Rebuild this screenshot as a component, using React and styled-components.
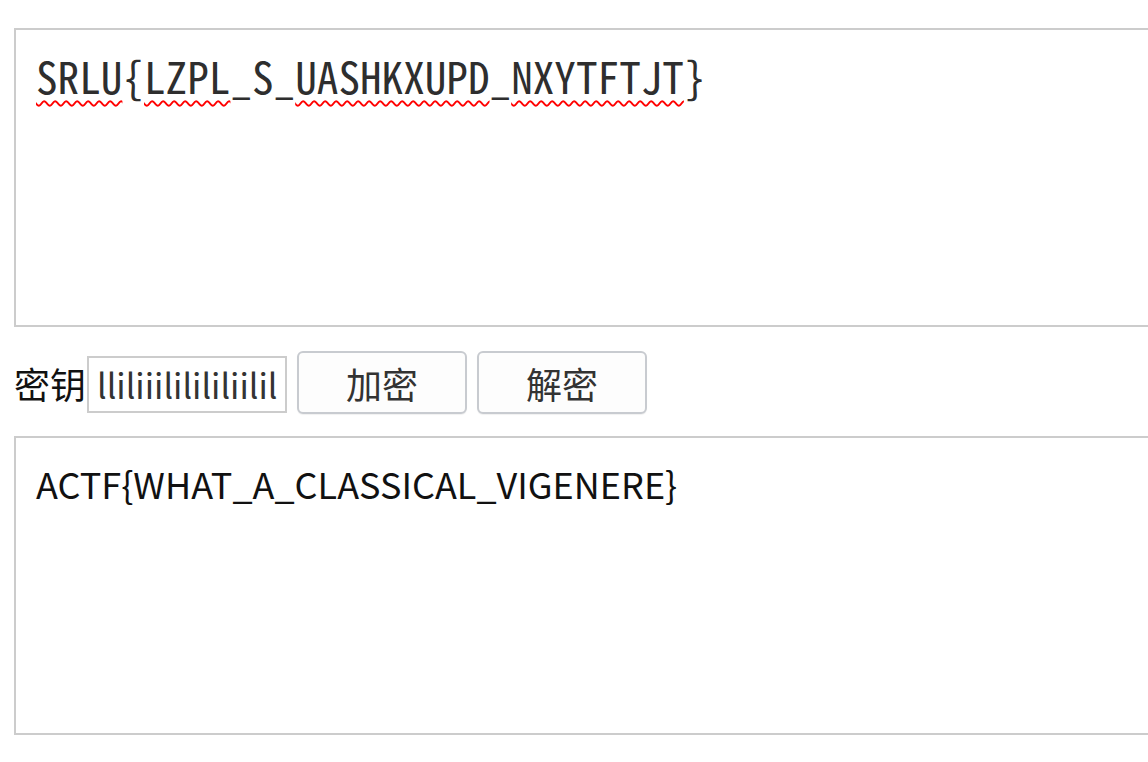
import React from "react";
import styled, { createGlobalStyle } from "styled-components";

const Global = createGlobalStyle`
  html, body { margin: 0; padding: 0; background: #fff; overflow: hidden; }
  body { width: 1148px; height: 762px; }
`;

const Page = styled.div`
  padding: 28px 0 0 14px;
  display: flex;
  flex-direction: column;
  align-items: flex-start;
`;

const Box = styled.div`
  box-sizing: border-box;
  width: 1200px;
  height: 299px;
  border: 2px solid #cccccc;
  padding: 19px 20px;
  font-size: ${(p) => (p.$mono ? "43.2px" : "36px")};
  line-height: 52px;
  white-space: pre;
  overflow: hidden;
  font-family: ${(p) =>
    p.$mono
      ? `"Noto Sans Mono CJK SC", "DejaVu Sans Mono", monospace`
      : `"Noto Sans CJK SC", sans-serif`};
  color: ${(p) => (p.$mono ? "#2e2e2e" : "#111")};
`;

const Misspelled = styled.span`
  text-decoration: underline wavy #ff0000;
  text-decoration-thickness: 2px;
  text-underline-offset: 6px;
  text-decoration-skip-ink: none;
`;

const Row = styled.div`
  display: flex;
  align-items: center;
  margin: 24px 0 22px;
  height: 63px;
  font-family: "Noto Sans CJK SC", sans-serif;
  font-size: 36px;
`;

const Label = styled.span`
  color: #111;
  line-height: 1;
  margin-right: 1px;
`;

const KeyInput = styled.input`
  box-sizing: border-box;
  width: 200px;
  height: 57px;
  margin: 3px 0 0 0;
  border: 2px solid #cccccc;
  padding: 0 6px 0 8px;
  font-family: "Noto Sans CJK SC", sans-serif;
  font-size: 34px;
  color: #333;
  outline: none;
  background: #fff;
`;

const Button = styled.button`
  box-sizing: border-box;
  width: 170px;
  height: 63px;
  margin-left: 10px;
  border: 2px solid #c8cbd0;
  border-radius: 6px;
  background: #fdfdfd;
  box-shadow: 0 1px 1px rgba(0, 0, 0, 0.06);
  font-family: "Noto Sans CJK SC", sans-serif;
  font-size: 36px;
  color: #333;
  padding: 0;
  cursor: pointer;
`;

export default function App() {
  return (
    <>
      <Global />
      <Page>
        <Box $mono>
          <Misspelled>SRLU</Misspelled>
          {"{"}
          <Misspelled>LZPL</Misspelled>
          {"_S_"}
          <Misspelled>UASHKXUPD</Misspelled>
          {"_"}
          <Misspelled>NXYTFTJT</Misspelled>
          {"}"}
        </Box>
        <Row>
          <Label>密钥</Label>
          <KeyInput defaultValue="lliliiililililiilil" spellCheck={false} />
          <Button>加密</Button>
          <Button>解密</Button>
        </Row>
        <Box>ACTF{"{"}WHAT_A_CLASSICAL_VIGENERE{"}"}</Box>
      </Page>
    </>
  );
}
